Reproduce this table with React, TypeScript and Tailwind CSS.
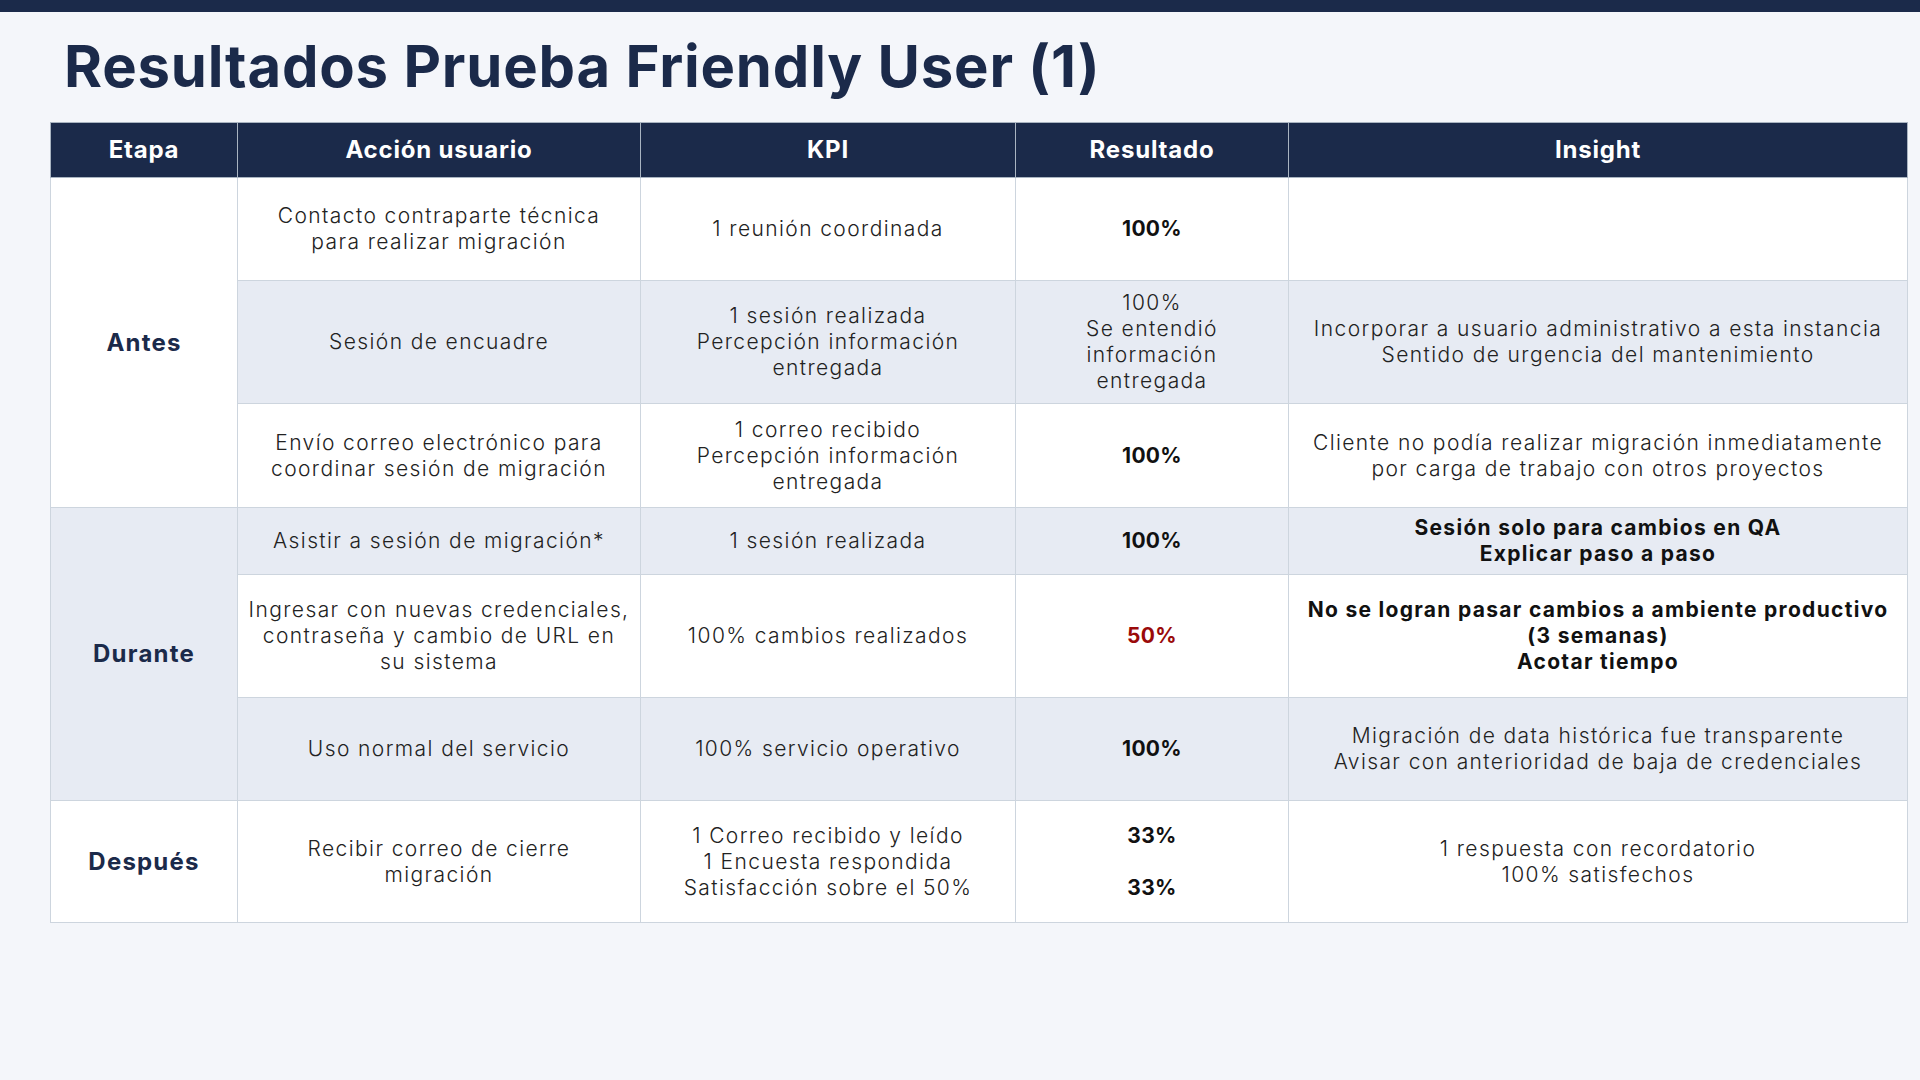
import React from "react";

type Cell = { lines: string[]; bold?: boolean; red?: boolean; kind?: "result" };

interface Row {
  accion: string[];
  kpi: string[];
  resultado: Cell;
  insight: Cell;
  tinted: boolean;
  h: string;
}

const rows: Row[] = [
  {
    accion: ["Contacto contraparte técnica", "para realizar migración"],
    kpi: ["1 reunión coordinada"],
    resultado: { lines: ["100%"], bold: true, kind: "result" },
    insight: { lines: [] },
    tinted: false,
    h: "h-[103px]",
  },
  {
    accion: ["Sesión de encuadre"],
    kpi: ["1 sesión realizada", "Percepción información", "entregada"],
    resultado: { lines: ["100%", "Se entendió", "información", "entregada"] },
    insight: {
      lines: [
        "Incorporar a usuario administrativo a esta instancia",
        "Sentido de urgencia del mantenimiento",
      ],
    },
    tinted: true,
    h: "h-[123px]",
  },
  {
    accion: ["Envío correo electrónico para", "coordinar sesión de migración"],
    kpi: ["1 correo recibido", "Percepción información", "entregada"],
    resultado: { lines: ["100%"], bold: true, kind: "result" },
    insight: {
      lines: [
        "Cliente no podía realizar migración inmediatamente",
        "por carga de trabajo con otros proyectos",
      ],
    },
    tinted: false,
    h: "h-[104px]",
  },
  {
    accion: ["Asistir a sesión de migración*"],
    kpi: ["1 sesión realizada"],
    resultado: { lines: ["100%"], bold: true, kind: "result" },
    insight: {
      lines: ["Sesión solo para cambios en QA", "Explicar paso a paso"],
      bold: true,
    },
    tinted: true,
    h: "h-[67px]",
  },
  {
    accion: [
      "Ingresar con nuevas credenciales,",
      "contraseña y cambio de URL en",
      "su sistema",
    ],
    kpi: ["100% cambios realizados"],
    resultado: { lines: ["50%"], bold: true, red: true, kind: "result" },
    insight: {
      lines: [
        "No se logran pasar cambios a ambiente productivo",
        "(3 semanas)",
        "Acotar tiempo",
      ],
      bold: true,
    },
    tinted: false,
    h: "h-[123px]",
  },
  {
    accion: ["Uso normal del servicio"],
    kpi: ["100% servicio operativo"],
    resultado: { lines: ["100%"], bold: true, kind: "result" },
    insight: {
      lines: [
        "Migración de data histórica fue transparente",
        "Avisar con anterioridad de baja de credenciales",
      ],
    },
    tinted: true,
    h: "h-[103px]",
  },
  {
    accion: ["Recibir correo de cierre", "migración"],
    kpi: [
      "1 Correo recibido y leído",
      "1 Encuesta respondida",
      "Satisfacción sobre el 50%",
    ],
    resultado: { lines: ["33%", "\u00a0", "33%"], bold: true, kind: "result" },
    insight: { lines: ["1 respuesta con recordatorio", "100% satisfechos"] },
    tinted: false,
    h: "h-[122px]",
  },
];

const stages: Record<number, { label: string; span: number; tinted: boolean }> = {
  0: { label: "Antes", span: 3, tinted: false },
  3: { label: "Durante", span: 3, tinted: true },
  6: { label: "Después", span: 1, tinted: false },
};

function Lines({ cell }: { cell: Cell }) {
  let cls = "tracking-[1.4px]";
  if (cell.kind === "result") {
    cls = cell.red
      ? "font-bold tracking-[0.3px] text-[#9a0a0a]"
      : "font-bold tracking-[0.3px] text-[#111111]";
  } else if (cell.bold) {
    cls = "font-bold tracking-[1.3px] text-[#111111]";
  }
  return (
    <>
      {cell.lines.map((l, i) => (
        <div key={i} className={cls}>
          {l}
        </div>
      ))}
    </>
  );
}

const td = "border border-[#cdd5de] px-1 text-center align-middle whitespace-nowrap";

export default function App() {
  return (
    <div className="min-h-[1080px] w-[1920px] bg-[#f4f6fa] font-['Inter',sans-serif]">
      <div className="h-[12px] bg-[#1b2a4a]" />
      <h1 className="ml-[64px] mt-[14px] text-[58px] font-bold leading-[80px] tracking-[0.8px] text-[#1b2a4a]">
        Resultados Prueba Friendly User (1)
      </h1>
      <div className="ml-[50px] mt-[16px] w-[1858px]">
        <table className="w-full table-fixed border-collapse text-[21px] font-light leading-[26px] text-[#222222]">
          <colgroup>
            <col className="w-[187px]" />
            <col className="w-[403px]" />
            <col className="w-[375px]" />
            <col className="w-[273px]" />
            <col />
          </colgroup>
          <thead>
            <tr className="h-[55px] bg-[#1b2a4a] text-[24px] font-bold tracking-[0.8px] text-white">
              {["Etapa", "Acción usuario", "KPI", "Resultado", "Insight"].map((h) => (
                <th key={h} className="border border-[#a9b4c1] text-center font-bold">
                  {h}
                </th>
              ))}
            </tr>
          </thead>
          <tbody>
            {rows.map((r, i) => (
              <tr key={i} className={`${r.h} ${r.tinted ? "bg-[#e7ebf3]" : "bg-white"}`}>
                {stages[i] && (
                  <td
                    rowSpan={stages[i].span}
                    className={`${td} text-[24px] font-bold tracking-[1.2px] text-[#1b2a4a] ${
                      stages[i].tinted ? "bg-[#e7ebf3]" : "bg-white"
                    }`}
                  >
                    {stages[i].label}
                  </td>
                )}
                <td className={td}>
                  <Lines cell={{ lines: r.accion }} />
                </td>
                <td className={td}>
                  <Lines cell={{ lines: r.kpi }} />
                </td>
                <td className={td}>
                  <Lines cell={r.resultado} />
                </td>
                <td className={td}>
                  <Lines cell={r.insight} />
                </td>
              </tr>
            ))}
          </tbody>
        </table>
      </div>
    </div>
  );
}
